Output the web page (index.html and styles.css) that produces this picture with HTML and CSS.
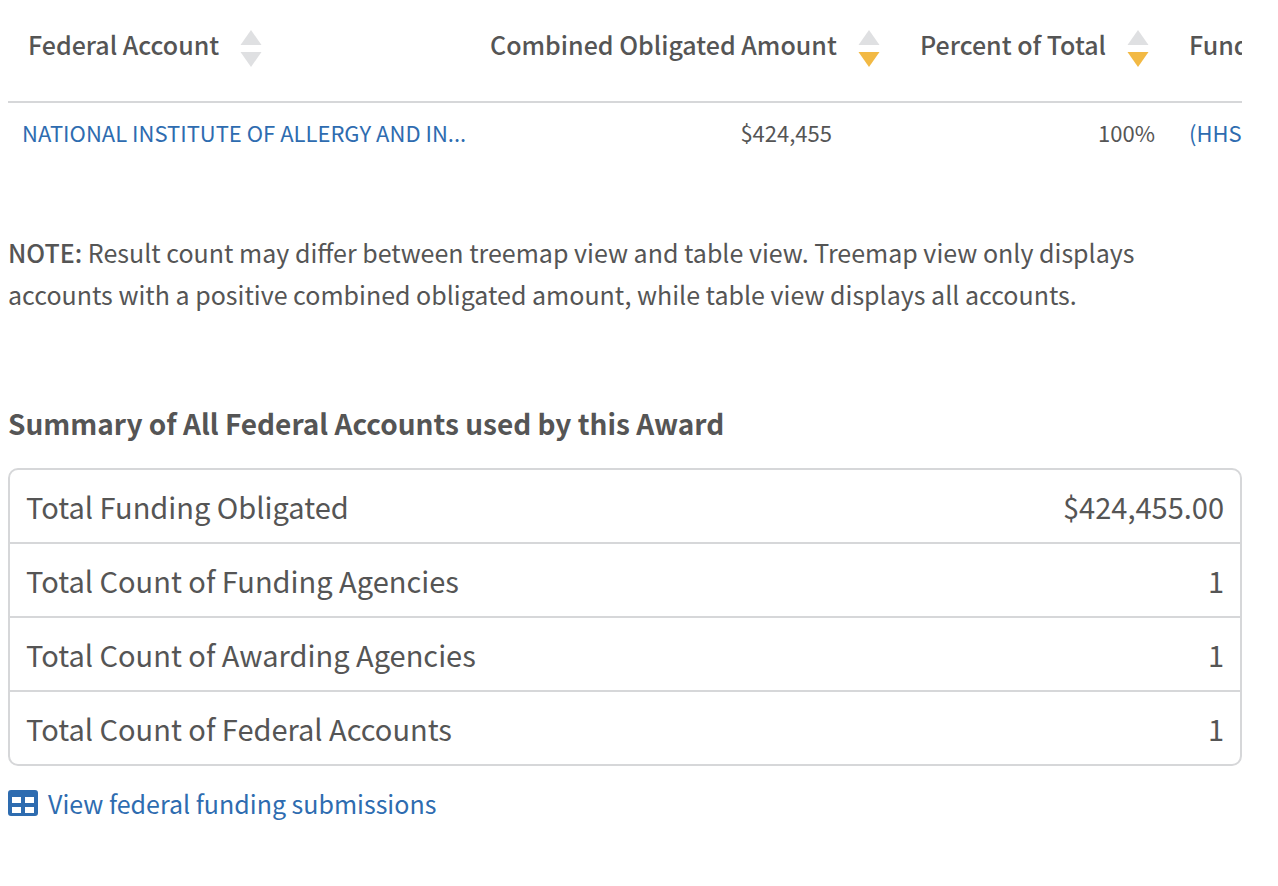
FILE: index.html
```html
<!DOCTYPE html>
<html lang="en">

<head>
  <meta charset="UTF-8" />
  <meta name="viewport" content="width=device-width, initial-scale=1.0" />
  <title>Federal Accounts</title>
  <link rel="stylesheet" href="styles.css">
</head>

<body>
  <main class="accounts">
    <div class="table-wrap">
      <table class="accounts-table">
        <colgroup>
          <col class="col-account">
          <col class="col-amount">
          <col class="col-percent">
          <col class="col-agency">
        </colgroup>
        <thead>
          <tr>
            <th scope="col">
              <button type="button" class="sort">
                Federal Account
                <svg class="arrows" viewBox="0 0 22 38" aria-hidden="true">
                  <path class="up" d="M11 0 L21.5 15 H0.5 Z" />
                  <path class="down" d="M0.5 22 H21.5 L11 37 Z" />
                </svg>
              </button>
            </th>
            <th scope="col">
              <button type="button" class="sort active">
                Combined Obligated Amount
                <svg class="arrows" viewBox="0 0 22 38" aria-hidden="true">
                  <path class="up" d="M11 0 L21.5 15 H0.5 Z" />
                  <path class="down" d="M0.5 22 H21.5 L11 37 Z" />
                </svg>
              </button>
            </th>
            <th scope="col">
              <button type="button" class="sort active">
                Percent of Total
                <svg class="arrows" viewBox="0 0 22 38" aria-hidden="true">
                  <path class="up" d="M11 0 L21.5 15 H0.5 Z" />
                  <path class="down" d="M0.5 22 H21.5 L11 37 Z" />
                </svg>
              </button>
            </th>
            <th scope="col">
              <button type="button" class="sort">Funding Agency</button>
            </th>
          </tr>
        </thead>
        <tbody>
          <tr>
            <td class="account"><a href="#">NATIONAL INSTITUTE OF ALLERGY AND IN...</a></td>
            <td class="amount">$424,455</td>
            <td class="percent">100%</td>
            <td><a href="#">(HHS)</a></td>
          </tr>
        </tbody>
      </table>
    </div>

    <p class="note"><strong>NOTE:</strong> Result count may differ between treemap view and table view. Treemap view only displays accounts with a positive combined obligated amount, while table view displays all accounts.</p>

    <h2 class="summary-title">Summary of All Federal Accounts used by this Award</h2>
    <div class="summary">
      <table class="summary-table">
        <tbody>
          <tr>
            <th scope="row">Total Funding Obligated</th>
            <td>$424,455.00</td>
          </tr>
          <tr>
            <th scope="row">Total Count of Funding Agencies</th>
            <td>1</td>
          </tr>
          <tr>
            <th scope="row">Total Count of Awarding Agencies</th>
            <td>1</td>
          </tr>
          <tr>
            <th scope="row">Total Count of Federal Accounts</th>
            <td>1</td>
          </tr>
        </tbody>
      </table>
    </div>

    <a class="submissions" href="#">
      <svg class="table-icon" viewBox="0 0 30 26" aria-hidden="true">
        <path fill-rule="evenodd" d="M3 0H27A3 3 0 0 1 30 3V23A3 3 0 0 1 27 26H3A3 3 0 0 1 0 23V3A3 3 0 0 1 3 0Z M4 7V13H13V7Z M17 7V13H26V7Z M4 17V23H13V17Z M17 17V23H26V17Z" />
      </svg>
      View federal funding submissions
    </a>
  </main>
</body>

</html>
```

FILE: styles.css
```css
* {
  box-sizing: border-box;
}

body {
  margin: 0;
  background-color: #fff;
  color: #555;
  font-family: "Noto Sans CJK SC", "Noto Sans", sans-serif;
  font-size: 25px;
  line-height: 42px;
}

a {
  color: #2e6cb0;
  text-decoration: none;
}

.accounts {
  padding: 0 36px 32px 8px;
}

/* accounts table, runs past the right edge */
.table-wrap {
  overflow: hidden;
}

.accounts-table {
  width: 1500px;
  table-layout: fixed;
  border-collapse: collapse;
}

.col-account {
  width: 462px;
}

.col-amount {
  width: 430px;
}

.col-percent {
  width: 269px;
}

.accounts-table th {
  height: 102px;
  padding: 23px 0 0 20px;
  border-bottom: 2px solid #d6d7d9;
  text-align: left;
  vertical-align: top;
}

.accounts-table td {
  padding: 8px 20px;
  font-size: 22px;
  white-space: nowrap;
}

.accounts-table .account {
  padding: 8px 0 8px 14px;
}

.accounts-table .amount {
  padding-right: 68px;
  text-align: right;
}

.accounts-table .percent {
  padding-right: 14px;
  text-align: right;
}

.sort {
  display: flex;
  gap: 21px;
  padding: 0;
  border: 0;
  background: none;
  color: inherit;
  font: inherit;
  font-weight: 500;
  white-space: nowrap;
  cursor: pointer;
}

.arrows {
  width: 22px;
  height: 38px;
  margin-top: 7px;
}

.arrows path {
  fill: #dfe0e2;
}

.active .down {
  fill: #f2b944;
}

.note {
  margin: 70px 0 0;
}

.note strong {
  font-weight: 500;
}

.summary-title {
  margin: 87px 0 24px;
  font-size: 28px;
  font-weight: 600;
}

/* summary box */
.summary {
  border: 2px solid #d6d7d9;
  border-radius: 10px;
}

.summary-table {
  width: 100%;
  border-spacing: 0;
  font-size: 29px;
}

.summary-table th,
.summary-table td {
  height: 72px;
  padding: 0 16px;
  text-align: left;
  font-weight: 400;
}

.summary-table td {
  text-align: right;
}

.summary-table tr + tr > * {
  height: 74px;
  border-top: 2px solid #d6d7d9;
}

.submissions {
  display: flex;
  align-items: center;
  gap: 10px;
  margin-top: 16px;
}

.table-icon {
  width: 30px;
  height: 26px;
  fill: #2e6cb0;
}
```
